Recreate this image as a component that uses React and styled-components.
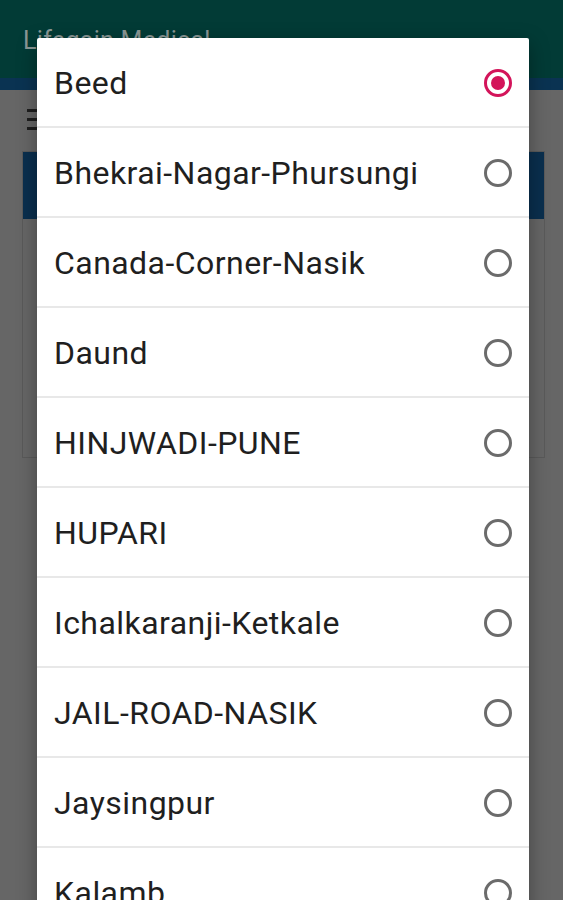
import React from "react";
import styled, { createGlobalStyle } from "styled-components";

const GlobalStyle = createGlobalStyle`
  html, body {
    margin: 0;
    padding: 0;
    background: #666666;
    overflow: hidden;
  }
  * {
    box-sizing: border-box;
  }
`;

const Page = styled.div`
  width: 563px;
  height: 900px;
  position: relative;
  background: #666666;
  font-family: Roboto, "Noto Sans", sans-serif;
  overflow: hidden;
`;

const AppBar = styled.header`
  height: 78px;
  background: #023b36;
  padding: 26px 0 0 23px;
`;

const Title = styled.h1`
  margin: 0;
  font-size: 25px;
  font-weight: 400;
  color: #8a9795;
  letter-spacing: 0.3px;
`;

const TabStrip = styled.div`
  height: 12px;
  background: #0a3352;
`;

const Content = styled.main`
  padding: 19px 18px 0 22px;
  display: flex;
  flex-direction: column;
  gap: 21px;
`;

const Burger = styled.div`
  display: flex;
  flex-direction: column;
  gap: 6px;
  padding-left: 5px;
`;

const BurgerLine = styled.span`
  display: block;
  width: 18px;
  height: 3px;
  background: #1e1e1e;
`;

const Card = styled.section`
  height: 307px;
  border: 1px solid #5a5a5a;
  display: flex;
  flex-direction: column;
`;

const CardHeader = styled.div`
  height: 67px;
  background: #0a2f4e;
`;

const Dialog = styled.div`
  position: absolute;
  left: 37px;
  top: 38px;
  width: 492px;
  background: #ffffff;
  border-radius: 2px;
  box-shadow: 0 6px 20px rgba(0, 0, 0, 0.35);
`;

const List = styled.ul`
  list-style: none;
  margin: 0;
  padding: 0;
`;

const Option = styled.li`
  height: 90px;
  display: flex;
  align-items: center;
  justify-content: space-between;
  padding: 1px 17px 0 17px;
  border-bottom: 2px solid #e8e8e8;
`;

const Label = styled.span`
  font-size: 32px;
  color: #1f1f1f;
  letter-spacing: 0.45px;
`;

const Radio = styled.span`
  width: 28px;
  height: 28px;
  border-radius: 50%;
  border: 3px solid ${(p) => (p.$checked ? "#d3145a" : "#6b6b6b")};
  display: flex;
  align-items: center;
  justify-content: center;
  &::after {
    content: "";
    display: ${(p) => (p.$checked ? "block" : "none")};
    width: 14px;
    height: 14px;
    border-radius: 50%;
    background: #d3145a;
  }
`;

const branches = [
  "Beed",
  "Bhekrai-Nagar-Phursungi",
  "Canada-Corner-Nasik",
  "Daund",
  "HINJWADI-PUNE",
  "HUPARI",
  "Ichalkaranji-Ketkale",
  "JAIL-ROAD-NASIK",
  "Jaysingpur",
  "Kalamb",
];

function App() {
  return (
    <Page>
      <GlobalStyle />
      <AppBar>
        <Title>Lifegain Medical</Title>
      </AppBar>
      <TabStrip />
      <Content>
        <Burger>
          <BurgerLine />
          <BurgerLine />
          <BurgerLine />
        </Burger>
        <Card>
          <CardHeader />
        </Card>
      </Content>

      <Dialog>
        <List>
          {branches.map((name, i) => (
            <Option key={name}>
              <Label>{name}</Label>
              <Radio $checked={i === 0} />
            </Option>
          ))}
        </List>
      </Dialog>
    </Page>
  );
}

export default App;
